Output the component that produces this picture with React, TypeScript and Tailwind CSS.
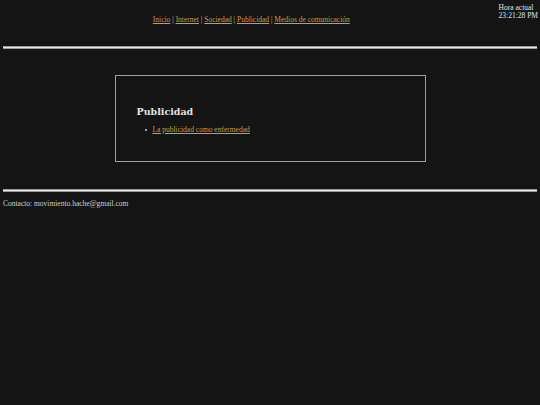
import React from 'react';

const App: React.FC = () => {
  const links = ['Inicio', 'Internet', 'Sociedad', 'Publicidad', 'Medios de comunicación'];

  return (
    <div className="min-h-[405px] w-full bg-[#141414] text-[#d8d8d8] font-['Liberation_Serif',serif] text-[7.5px] leading-[8px]">
      {/* Header */}
      <div className="flex items-start pt-[4px] pr-[2px]">
        <nav className="flex-1 text-center pt-[12px] pl-[4px]">
          {links.map((l, i) => (
            <span key={l}>
              {i > 0 && <span className="text-[#c4c4c4]"> | </span>}
              <a href="#" className="text-[#d39b3b] underline">{l}</a>
            </span>
          ))}
        </nav>
        <div className="text-[#e6e6e6]">
          <div>Hora actual</div>
          <div>23:21:28 PM</div>
        </div>
      </div>

      <div className="mx-[3px] mt-[22px] h-[3px] bg-[#e8e8e8] border-y border-[#9a9a9a]" />

      {/* Main */}
      <div className="flex justify-center pt-[26px] pb-[27px]">
        <div className="w-[311px] h-[87px] border-[1.5px] border-[#a0a0a0] pt-[30px] pl-[21px]">
          <h2 className="font-['DejaVu_Serif',serif] font-bold text-[9.5px] leading-[12px] text-[#e2e2e2]">Publicidad</h2>
          <ul className="mt-[7px] pl-[8px]">
            <li className="flex items-center gap-[6px] pt-[1px]">
              <span className="w-[2px] h-[2px] rounded-full bg-[#d0d0d0]" />
              <a href="#" className="text-[#d39b3b] underline">La publicidad como enfermedad</a>
            </li>
          </ul>
        </div>
      </div>

      <div className="mx-[3px] h-[3px] bg-[#e8e8e8] border-y border-[#9a9a9a]" />

      <div className="px-[3px] pt-[8px] text-[#d0d0d0]">Contacto: movimiento.hache@gmail.com</div>
    </div>
  );
};

export default App;
